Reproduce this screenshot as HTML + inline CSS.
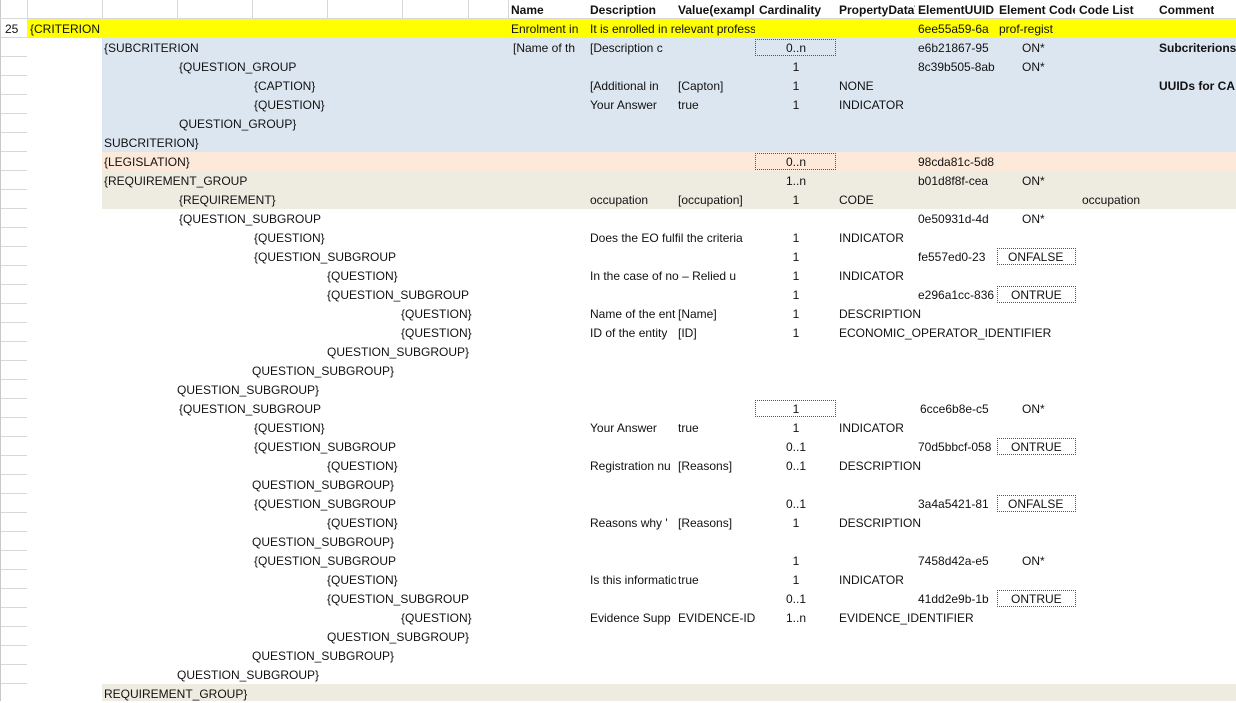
<!DOCTYPE html>
<html><head><meta charset="utf-8"><style>
body{margin:0;width:1236px;height:701px;overflow:hidden;background:#fff;position:relative;font-family:"Liberation Sans",sans-serif;font-size:12px;color:#111}
.f{position:absolute;height:19px}
.t{position:absolute;height:19px;line-height:21px;white-space:nowrap;overflow:hidden}
.h{font-weight:bold}
.c{text-align:center;width:80px;left:756px}
.box{position:absolute;height:17px;border:1px dotted #555;box-sizing:border-box}
.gl{position:absolute;left:1px;width:26px;height:1px;background:#d8d8d8}
.vl{position:absolute;top:0;height:19px;width:1px;background:#d8d8d8}
</style></head><body>
<div style="position:absolute;left:0;top:0;width:1px;height:701px;background:#c8c8c8"></div>
<div class="gl" style="top:18px;left:0;width:1236px"></div>
<div class="gl" style="top:37px"></div><div class="gl" style="top:56px"></div><div class="gl" style="top:75px"></div><div class="gl" style="top:94px"></div><div class="gl" style="top:113px"></div><div class="gl" style="top:132px"></div><div class="gl" style="top:151px"></div><div class="gl" style="top:170px"></div><div class="gl" style="top:189px"></div><div class="gl" style="top:208px"></div><div class="gl" style="top:227px"></div><div class="gl" style="top:246px"></div><div class="gl" style="top:265px"></div><div class="gl" style="top:284px"></div><div class="gl" style="top:303px"></div><div class="gl" style="top:322px"></div><div class="gl" style="top:341px"></div><div class="gl" style="top:360px"></div><div class="gl" style="top:379px"></div><div class="gl" style="top:398px"></div><div class="gl" style="top:417px"></div><div class="gl" style="top:436px"></div><div class="gl" style="top:455px"></div><div class="gl" style="top:474px"></div><div class="gl" style="top:493px"></div><div class="gl" style="top:512px"></div><div class="gl" style="top:531px"></div><div class="gl" style="top:550px"></div><div class="gl" style="top:569px"></div><div class="gl" style="top:588px"></div><div class="gl" style="top:607px"></div><div class="gl" style="top:626px"></div><div class="gl" style="top:645px"></div><div class="gl" style="top:664px"></div><div class="gl" style="top:683px"></div>
<div class="vl" style="left:27px"></div><div class="vl" style="left:102px"></div><div class="vl" style="left:177px"></div><div class="vl" style="left:252px"></div><div class="vl" style="left:327px"></div><div class="vl" style="left:402px"></div><div class="vl" style="left:468px"></div><div class="vl" style="left:508px"></div>
<div class="f" style="top:19px;left:27px;width:1209px;background:#ffff00"></div>
<div class="f" style="top:38px;left:102px;width:1134px;height:114px;background:#dce6f1"></div>
<div class="f" style="top:152px;left:102px;width:1134px;background:#fde9d9"></div>
<div class="f" style="top:171px;left:102px;width:1134px;height:38px;background:#eeece1"></div>
<div class="f" style="top:684px;left:102px;width:1134px;height:17px;background:#eeece1"></div>
<div class="t h" style="top:0;left:511px">Name</div>
<div class="t h" style="top:0;left:590px;width:85px">Description</div>
<div class="t h" style="top:0;left:678px;width:77px">Value(example)</div>
<div class="t h" style="top:0;left:759px">Cardinality</div>
<div class="t h" style="top:0;left:839px;width:76px">PropertyDataType</div>
<div class="t h" style="top:0;left:918px;width:79px">ElementUUID</div>
<div class="t h" style="top:0;left:999px;width:76px">Element Code</div>
<div class="t h" style="top:0;left:1079px">Code List</div>
<div class="t h" style="top:0;left:1159px">Comment</div>
<div class="t" style="top:19px;left:5px">25</div>
<div class="t" style="top:19px;left:30px;width:72px">{CRITERION</div>
<div class="t" style="top:19px;left:511px;width:76px">Enrolment in</div>
<div class="t" style="top:19px;left:590px;width:165px">It is enrolled in relevant professional</div>
<div class="t" style="top:19px;left:918px;width:79px">6ee55a59-6a</div>
<div class="t" style="top:19px;left:999px;width:76px">prof-regist</div>
<div class="t" style="top:38px;left:104px">{SUBCRITERION</div>
<div class="t" style="top:38px;left:513px;width:74px">[Name of th</div>
<div class="t" style="top:38px;left:590px;width:85px">[Description c</div>
<div class="box" style="top:39px;left:755px;width:81px"></div><div class="t c" style="top:38px">0..n</div>
<div class="t" style="top:38px;left:918px;width:79px">e6b21867-95</div>
<div class="t" style="top:38px;left:1022px">ON*</div>
<div class="t h" style="top:38px;left:1159px">Subcriterions</div>
<div class="t" style="top:57px;left:179px">{QUESTION_GROUP</div>
<div class="t c" style="top:57px">1</div>
<div class="t" style="top:57px;left:918px;width:79px">8c39b505-8ab</div>
<div class="t" style="top:57px;left:1022px">ON*</div>
<div class="t" style="top:76px;left:254px">{CAPTION}</div>
<div class="t" style="top:76px;left:590px;width:85px">[Additional in</div>
<div class="t" style="top:76px;left:678px">[Capton]</div>
<div class="t c" style="top:76px">1</div>
<div class="t" style="top:76px;left:839px">NONE</div>
<div class="t h" style="top:76px;left:1159px">UUIDs for CA</div>
<div class="t" style="top:95px;left:254px">{QUESTION}</div>
<div class="t" style="top:95px;left:590px">Your Answer</div>
<div class="t" style="top:95px;left:678px">true</div>
<div class="t c" style="top:95px">1</div>
<div class="t" style="top:95px;left:839px">INDICATOR</div>
<div class="t" style="top:114px;left:179px">QUESTION_GROUP}</div>
<div class="t" style="top:133px;left:104px">SUBCRITERION}</div>
<div class="t" style="top:152px;left:104px">{LEGISLATION}</div>
<div class="box" style="top:153px;left:755px;width:81px"></div><div class="t c" style="top:152px">0..n</div>
<div class="t" style="top:152px;left:918px;width:79px">98cda81c-5d8</div>
<div class="t" style="top:171px;left:104px">{REQUIREMENT_GROUP</div>
<div class="t c" style="top:171px">1..n</div>
<div class="t" style="top:171px;left:918px;width:79px">b01d8f8f-cea</div>
<div class="t" style="top:171px;left:1022px">ON*</div>
<div class="t" style="top:190px;left:179px">{REQUIREMENT}</div>
<div class="t" style="top:190px;left:590px">occupation</div>
<div class="t" style="top:190px;left:678px;width:77px">[occupation]</div>
<div class="t c" style="top:190px">1</div>
<div class="t" style="top:190px;left:839px">CODE</div>
<div class="t" style="top:190px;left:1082px">occupation</div>
<div class="t" style="top:209px;left:179px">{QUESTION_SUBGROUP</div>
<div class="t" style="top:209px;left:918px;width:79px">0e50931d-4d</div>
<div class="t" style="top:209px;left:1022px">ON*</div>
<div class="t" style="top:228px;left:254px">{QUESTION}</div>
<div class="t" style="top:228px;left:590px;width:165px">Does the EO fulfil the criteria</div>
<div class="t c" style="top:228px">1</div>
<div class="t" style="top:228px;left:839px">INDICATOR</div>
<div class="t" style="top:247px;left:254px">{QUESTION_SUBGROUP</div>
<div class="t c" style="top:247px">1</div>
<div class="t" style="top:247px;left:918px;width:79px">fe557ed0-23</div>
<div class="box" style="top:248px;left:997px;width:79px"></div><div class="t" style="top:247px;left:1008px">ONFALSE</div>
<div class="t" style="top:266px;left:327px">{QUESTION}</div>
<div class="t" style="top:266px;left:590px;width:165px">In the case of no – Relied u</div>
<div class="t c" style="top:266px">1</div>
<div class="t" style="top:266px;left:839px">INDICATOR</div>
<div class="t" style="top:285px;left:327px">{QUESTION_SUBGROUP</div>
<div class="t c" style="top:285px">1</div>
<div class="t" style="top:285px;left:918px;width:79px">e296a1cc-836</div>
<div class="box" style="top:286px;left:997px;width:79px"></div><div class="t" style="top:285px;left:1011px">ONTRUE</div>
<div class="t" style="top:304px;left:401px">{QUESTION}</div>
<div class="t" style="top:304px;left:590px;width:86px">Name of the ent</div>
<div class="t" style="top:304px;left:678px">[Name]</div>
<div class="t c" style="top:304px">1</div>
<div class="t" style="top:304px;left:839px">DESCRIPTION</div>
<div class="t" style="top:323px;left:401px">{QUESTION}</div>
<div class="t" style="top:323px;left:590px;width:86px">ID of the entity</div>
<div class="t" style="top:323px;left:678px">[ID]</div>
<div class="t c" style="top:323px">1</div>
<div class="t" style="top:323px;left:839px">ECONOMIC_OPERATOR_IDENTIFIER</div>
<div class="t" style="top:342px;left:327px">QUESTION_SUBGROUP}</div>
<div class="t" style="top:361px;left:252px">QUESTION_SUBGROUP}</div>
<div class="t" style="top:380px;left:177px">QUESTION_SUBGROUP}</div>
<div class="t" style="top:399px;left:179px">{QUESTION_SUBGROUP</div>
<div class="box" style="top:400px;left:755px;width:81px"></div><div class="t c" style="top:399px">1</div>
<div class="t" style="top:399px;left:920px;width:77px">6cce6b8e-c5</div>
<div class="t" style="top:399px;left:1022px">ON*</div>
<div class="t" style="top:418px;left:254px">{QUESTION}</div>
<div class="t" style="top:418px;left:590px">Your Answer</div>
<div class="t" style="top:418px;left:678px">true</div>
<div class="t c" style="top:418px">1</div>
<div class="t" style="top:418px;left:839px">INDICATOR</div>
<div class="t" style="top:437px;left:254px">{QUESTION_SUBGROUP</div>
<div class="t c" style="top:437px">0..1</div>
<div class="t" style="top:437px;left:918px;width:79px">70d5bbcf-058</div>
<div class="box" style="top:438px;left:997px;width:79px"></div><div class="t" style="top:437px;left:1011px">ONTRUE</div>
<div class="t" style="top:456px;left:327px">{QUESTION}</div>
<div class="t" style="top:456px;left:590px;width:86px">Registration nu</div>
<div class="t" style="top:456px;left:678px">[Reasons]</div>
<div class="t c" style="top:456px">0..1</div>
<div class="t" style="top:456px;left:839px">DESCRIPTION</div>
<div class="t" style="top:475px;left:252px">QUESTION_SUBGROUP}</div>
<div class="t" style="top:494px;left:254px">{QUESTION_SUBGROUP</div>
<div class="t c" style="top:494px">0..1</div>
<div class="t" style="top:494px;left:918px;width:79px">3a4a5421-81</div>
<div class="box" style="top:495px;left:997px;width:79px"></div><div class="t" style="top:494px;left:1008px">ONFALSE</div>
<div class="t" style="top:513px;left:327px">{QUESTION}</div>
<div class="t" style="top:513px;left:590px;width:86px">Reasons why '</div>
<div class="t" style="top:513px;left:678px">[Reasons]</div>
<div class="t c" style="top:513px">1</div>
<div class="t" style="top:513px;left:839px">DESCRIPTION</div>
<div class="t" style="top:532px;left:252px">QUESTION_SUBGROUP}</div>
<div class="t" style="top:551px;left:254px">{QUESTION_SUBGROUP</div>
<div class="t c" style="top:551px">1</div>
<div class="t" style="top:551px;left:918px;width:79px">7458d42a-e5</div>
<div class="t" style="top:551px;left:1022px">ON*</div>
<div class="t" style="top:570px;left:327px">{QUESTION}</div>
<div class="t" style="top:570px;left:590px;width:86px">Is this information</div>
<div class="t" style="top:570px;left:678px">true</div>
<div class="t c" style="top:570px">1</div>
<div class="t" style="top:570px;left:839px">INDICATOR</div>
<div class="t" style="top:589px;left:327px">{QUESTION_SUBGROUP</div>
<div class="t c" style="top:589px">0..1</div>
<div class="t" style="top:589px;left:918px;width:79px">41dd2e9b-1b</div>
<div class="box" style="top:590px;left:997px;width:79px"></div><div class="t" style="top:589px;left:1011px">ONTRUE</div>
<div class="t" style="top:608px;left:401px">{QUESTION}</div>
<div class="t" style="top:608px;left:590px;width:86px">Evidence Supp</div>
<div class="t" style="top:608px;left:678px;width:77px">EVIDENCE-IDENTIFIER</div>
<div class="t c" style="top:608px">1..n</div>
<div class="t" style="top:608px;left:839px">EVIDENCE_IDENTIFIER</div>
<div class="t" style="top:627px;left:327px">QUESTION_SUBGROUP}</div>
<div class="t" style="top:646px;left:252px">QUESTION_SUBGROUP}</div>
<div class="t" style="top:665px;left:177px">QUESTION_SUBGROUP}</div>
<div class="t" style="top:684px;left:104px">REQUIREMENT_GROUP}</div>
</body></html>
